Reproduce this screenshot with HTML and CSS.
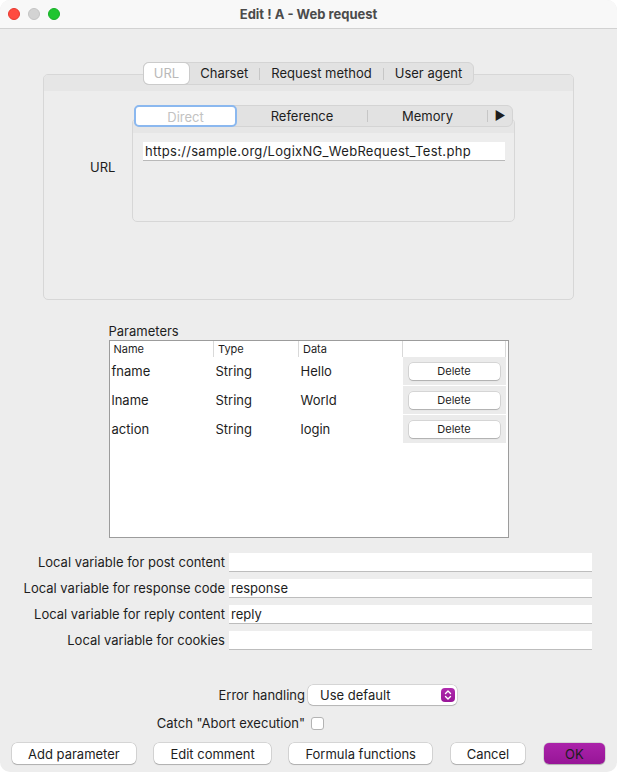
FILE: index.html
```html
<!DOCTYPE html>
<html lang="en">
<head>
    <meta charset="UTF-8">
    <meta name="viewport" content="width=device-width, initial-scale=1.0">
    <title>Edit ! A - Web request</title>
    <link rel="stylesheet" href="styles.css">
</head>
<body>
    <div class="window">
        <div class="titlebar">
            <div class="lights">
                <span class="light red"></span>
                <span class="light grey"></span>
                <span class="light green"></span>
            </div>
            <div class="title">Edit ! A - Web request</div>
        </div>

        <div class="content">
            <!-- Outer tabs -->
            <div class="tabpane outer">
                <div class="tabstrip">
                    <span class="tab selected">URL</span>
                    <span class="tab">Charset</span>
                    <span class="sep"></span>
                    <span class="tab">Request method</span>
                    <span class="sep"></span>
                    <span class="tab">User agent</span>
                </div>
                <div class="tabbox">
                    <div class="band"></div>
                    <div class="url-row">
                        <span class="url-label">URL</span>

                        <!-- Inner tabs -->
                        <div class="tabpane inner">
                            <div class="tabstrip">
                                <span class="itab direct">Direct</span>
                                <span class="itab reference">Reference</span>
                                <span class="sep"></span>
                                <span class="itab memory">Memory</span>
                                <span class="sep"></span>
                                <span class="itab more">&#9654;</span>
                            </div>
                            <div class="tabbox">
                                <div class="band"></div>
                                <div class="url-field">https://sample.org/LogixNG_WebRequest_Test.php</div>
                            </div>
                        </div>
                    </div>
                </div>
            </div>

            <div class="params">
                <div class="params-label">Parameters</div>
                <div class="table-box">
                    <table>
                        <colgroup>
                            <col class="col-name">
                            <col class="col-type">
                            <col class="col-data">
                            <col class="col-action">
                        </colgroup>
                        <thead>
                            <tr>
                                <th>Name</th>
                                <th>Type</th>
                                <th>Data</th>
                                <th></th>
                            </tr>
                        </thead>
                        <tbody id="param-rows">
                        </tbody>
                    </table>
                </div>
            </div>

            <div class="fields">
                <label>Local variable for post content</label>
                <div class="field"></div>
                <label>Local variable for response code</label>
                <div class="field">response</div>
                <label>Local variable for reply content</label>
                <div class="field">reply</div>
                <label>Local variable for cookies</label>
                <div class="field"></div>
            </div>

            <div class="options">
                <label>Error handling</label>
                <div class="select">
                    <span>Use default</span>
                    <span class="stepper">
                        <svg width="14" height="14" viewBox="0 0 14 14">
                            <path d="M4.5 5.5 L7 3 L9.5 5.5 M4.5 8.5 L7 11 L9.5 8.5" fill="none" stroke="#fff" stroke-width="1.4" stroke-linecap="round" stroke-linejoin="round"/>
                        </svg>
                    </span>
                </div>
                <label>Catch "Abort execution"</label>
                <div><span class="check"></span></div>
            </div>

            <div class="buttons">
                <button class="btn">Add parameter</button>
                <button class="btn">Edit comment</button>
                <button class="btn">Formula functions</button>
                <button class="btn">Cancel</button>
                <button class="btn ok">OK</button>
            </div>
        </div>
    </div>

    <script>
        // Parameter rows
        const params = [
            { name: 'fname', type: 'String', data: 'Hello' },
            { name: 'lname', type: 'String', data: 'World' },
            { name: 'action', type: 'String', data: 'login' }
        ];

        const rows = document.getElementById('param-rows');
        params.forEach(p => {
            const row = document.createElement('tr');
            row.innerHTML = `
                <td>${p.name}</td>
                <td>${p.type}</td>
                <td>${p.data}</td>
                <td class="action"><button class="del">Delete</button></td>
            `;
            rows.appendChild(row);
        });
    </script>
</body>
</html>
```

FILE: styles.css
```css
body {
    margin: 0;
    background: #ffffff;
    font-family: Inter, "Liberation Sans", sans-serif;
    font-size: 13px;
    color: #1d1d1d;
}

.window {
    width: 617px;
    height: 772px;
    background: #ededed;
    border-radius: 10px;
    overflow: hidden;
}

/* Title bar */
.titlebar {
    height: 28px;
    background: #f8f8f8;
    border-bottom: 1px solid #d2d2d2;
    display: grid;
    grid-template-columns: 1fr auto 1fr;
    align-items: center;
}

.lights {
    display: flex;
    gap: 8px;
    padding-left: 8px;
}

.light {
    width: 12px;
    height: 12px;
    border-radius: 50%;
    box-sizing: border-box;
}

.light.red { background: #ff4b40; border: 1px solid #e6392f; }
.light.grey { background: #d3d3d3; border: 1px solid #c4c4c4; }
.light.green { background: #1fc530; border: 1px solid #17b027; }

.title {
    font-weight: bold;
    color: #4b4b4b;
    margin-top: -1px;
}

.content {
    padding-top: 33px;
}

/* Tab panes */
.outer {
    margin: 0 43px;
}

.tabstrip {
    position: relative;
    z-index: 1;
    display: flex;
    align-items: center;
    width: max-content;
    margin: 0 auto;
    height: 23px;
    box-sizing: border-box;
    background: #e2e2e2;
    border: 1px solid #d4d4d4;
    border-radius: 6px;
}

.tab {
    padding: 0 11px;
    line-height: 21px;
}

.tab.selected {
    padding: 0 10px;
    background: #ffffff;
    color: #b9b9b9;
    border-radius: 5px;
    box-shadow: 0 0 0 1px #cbcbcb;
}

.sep {
    width: 1px;
    height: 12px;
    background: #c6c6c6;
}

.tabbox {
    margin-top: -11px;
    height: 226px;
    box-sizing: border-box;
    border: 1px solid #d7d7d7;
    border-radius: 5px;
    overflow: hidden;
}

.band {
    height: 16px;
    background: #e6e6e6;
}

.url-row {
    display: flex;
    align-items: flex-start;
    padding: 14px 0 0 46px;
}

.url-label {
    width: 42px;
    margin-top: 54px;
}

.inner {
    width: 383px;
}

.inner .tabstrip {
    width: auto;
    margin: 0 2px;
    height: 22px;
}

.itab {
    text-align: center;
    line-height: 20px;
}

.itab.direct {
    width: 103px;
    height: 22px;
    margin: -1px 0 0 -1px;
    box-sizing: border-box;
    background: #ffffff;
    color: #c2c2c2;
    border: 2px solid #8bb8ef;
    border-radius: 5px;
}

.itab.reference { width: 130px; }
.itab.memory { width: 119px; }
.itab.more { width: 24px; font-size: 12px; }

.inner .tabbox {
    margin-top: -9px;
    height: 104px;
}

.inner .band {
    height: 14px;
}

.url-field {
    margin: 9px 9px 0 10px;
    height: 19px;
    box-sizing: border-box;
    padding-left: 2px;
    line-height: 19px;
    letter-spacing: 0.3px;
    background: #ffffff;
    border-bottom: 1px solid #b9b9b9;
    white-space: nowrap;
}

/* Parameters table */
.params {
    width: 400px;
    margin: 23px auto 0;
}

.params-label {
    line-height: 16px;
    margin-bottom: 1px;
}

.table-box {
    height: 198px;
    box-sizing: border-box;
    background: #ffffff;
    border: 1px solid #9c9c9c;
}

table {
    width: 396px;
    table-layout: fixed;
    border-collapse: collapse;
}

.col-name { width: 104px; }
.col-type { width: 85px; }
.col-data { width: 104px; }
.col-action { width: 103px; }

th {
    height: 15px;
    padding: 0 4px;
    font-size: 11px;
    font-weight: normal;
    text-align: left;
    border-right: 1px solid #d9d9d9;
}

td {
    height: 28px;
    padding: 0 2px;
    border-top: 1px solid #ffffff;
}

td.action {
    background: #ebebeb;
    text-align: center;
    padding: 0;
}

.del {
    width: 91px;
    height: 17px;
    font-family: inherit;
    font-size: 11px;
    color: #1d1d1d;
    background: #ffffff;
    border: none;
    border-radius: 4px;
    box-shadow: 0 0 0 0.5px rgba(0, 0, 0, 0.18), 0 1px 1px rgba(0, 0, 0, 0.18);
}

/* Local variable fields */
.fields {
    display: grid;
    grid-template-columns: 225px 363px;
    column-gap: 4px;
    row-gap: 7px;
    margin-top: 15px;
}

.fields label {
    text-align: right;
    line-height: 19px;
    white-space: nowrap;
}

.field {
    height: 19px;
    box-sizing: border-box;
    padding-left: 2px;
    line-height: 19px;
    background: #ffffff;
    border-bottom: 1px solid #bdbdbd;
}

/* Error handling */
.options {
    display: grid;
    grid-template-columns: 305px auto;
    column-gap: 3px;
    row-gap: 10px;
    align-items: center;
    margin-top: 35px;
}

.options label {
    text-align: right;
    white-space: nowrap;
}

.select {
    width: 149px;
    height: 20px;
    box-sizing: border-box;
    display: flex;
    align-items: center;
    justify-content: space-between;
    padding: 0 2px 0 12px;
    background: #ffffff;
    border-radius: 5px;
    box-shadow: 0 0 0 0.5px rgba(0, 0, 0, 0.2), 0 1px 1px rgba(0, 0, 0, 0.15);
}

.stepper {
    display: flex;
    width: 14px;
    height: 14px;
    border-radius: 4px;
    background: linear-gradient(#b02aae, #991698);
}

.check {
    display: block;
    width: 13px;
    height: 13px;
    margin-left: 3px;
    box-sizing: border-box;
    background: #ffffff;
    border: 1px solid #b3b3b3;
    border-radius: 3px;
}

/* Bottom buttons */
.buttons {
    display: flex;
    justify-content: space-between;
    padding: 0 12px;
    margin-top: 12px;
}

.btn {
    height: 21px;
    padding: 0 16px;
    font-family: inherit;
    font-size: 13px;
    color: #1d1d1d;
    background: #ffffff;
    border: none;
    border-radius: 5px;
    box-shadow: 0 0 0 0.5px rgba(0, 0, 0, 0.2), 0 1px 1px rgba(0, 0, 0, 0.18);
}

.btn.ok {
    min-width: 61px;
    background: linear-gradient(#ab23aa, #971597);
}
```
